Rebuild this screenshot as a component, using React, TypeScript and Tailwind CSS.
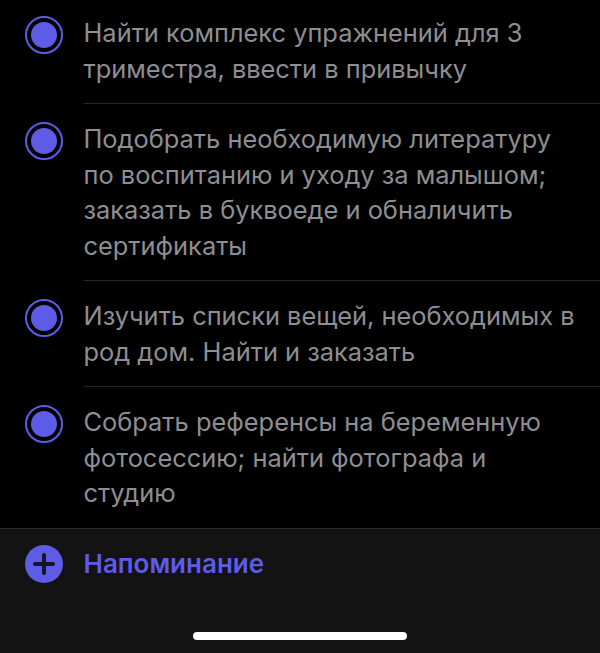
const items = [
  { id: 1, lines: ['Найти комплекс упражнений для 3', 'триместра, ввести в привычку'] },
  {
    id: 2,
    lines: [
      'Подобрать необходимую литературу',
      'по воспитанию и уходу за малышом;',
      'заказать в буквоеде и обналичить',
      'сертификаты',
    ],
  },
  { id: 3, lines: ['Изучить списки вещей, необходимых в', 'род дом. Найти и заказать'] },
  { id: 4, lines: ['Собрать референсы на беременную', 'фотосессию; найти фотографа и', 'студию'] },
];

function Radio() {
  return (
    <div className="flex h-[38px] w-[38px] shrink-0 items-center justify-center rounded-full border-2 border-[#5e5ce6]">
      <div className="h-[26px] w-[26px] rounded-full bg-[#5e5ce6]" />
    </div>
  );
}

export default function App() {
  return (
    <div className="flex h-[653px] w-[600px] flex-col overflow-hidden bg-black font-['Inter',sans-serif]">
      <div className="-mt-[2px] min-h-0 flex-1">
        {items.map((item, i) => (
          <div key={item.id} className="flex gap-[20.5px] pl-[25px]">
            <div className="pt-[17.5px]">
              <Radio />
            </div>
            <div
              className={`flex-1 border-b pt-[17px] pb-[17px] text-[25.4px] leading-[35.5px] whitespace-nowrap text-[#8e8e93] ${
                i < items.length - 1 ? 'border-[#262628]' : 'border-transparent'
              }`}
            >
              {item.lines.map((line) => (
                <div key={line}>{line}</div>
              ))}
            </div>
          </div>
        ))}
      </div>
      <div className="flex h-[125px] shrink-0 flex-col border-t border-[#2c2c2e] bg-[#131313]">
        <div className="flex items-center gap-[20.5px] pt-[15px] pl-[25px]">
          <svg width="38" height="38" viewBox="0 0 38 38" className="shrink-0">
            <circle cx="19" cy="19" r="19" fill="#5e5ce6" />
            <path d="M19 10v18M10 19h18" stroke="#15152b" strokeWidth="4" strokeLinecap="round" />
          </svg>
          <span className="text-[26px] font-semibold text-[#5e5ce6]">Напоминание</span>
        </div>
        <div className="mt-auto flex justify-center pb-[13.5px]">
          <div className="h-[8px] w-[214px] rounded-full bg-white" />
        </div>
      </div>
    </div>
  );
}
